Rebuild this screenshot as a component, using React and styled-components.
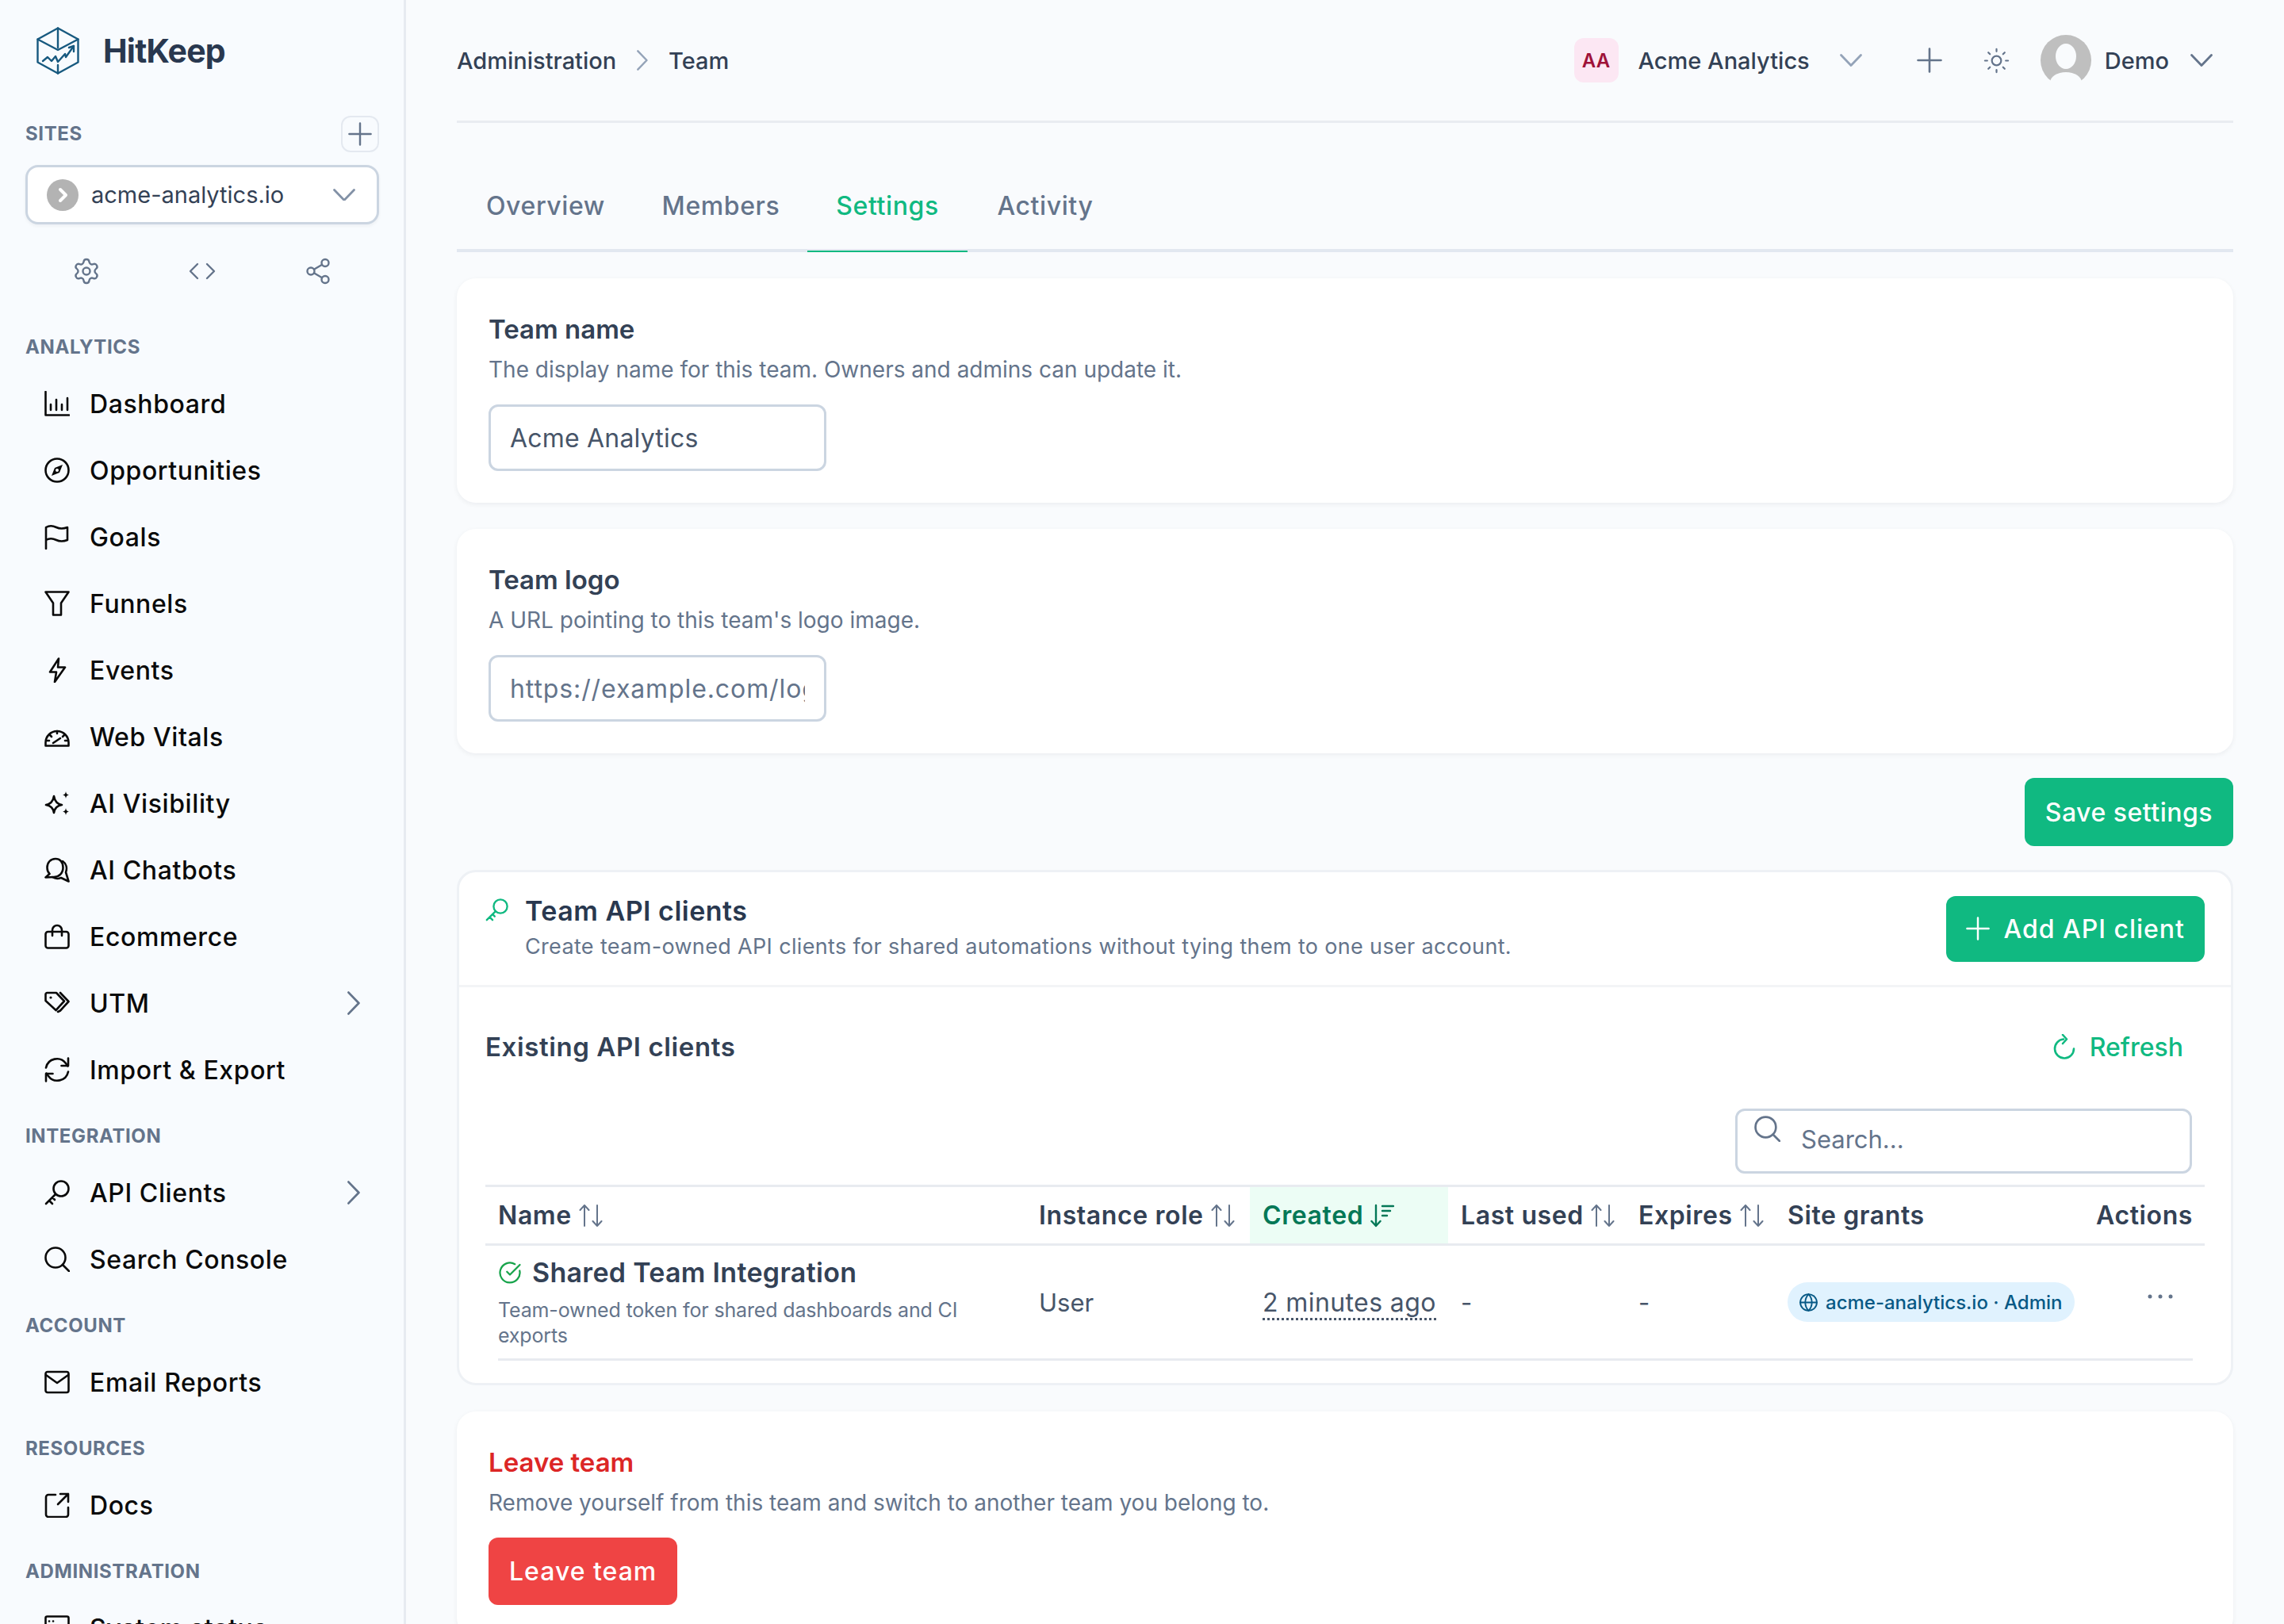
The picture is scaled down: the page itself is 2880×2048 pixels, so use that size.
import React from "react";
import styled, { createGlobalStyle } from "styled-components";
import { Settings, Code, Share2, Sun, CircleCheckBig, Globe } from "lucide-react";

const GlobalStyle = createGlobalStyle`
  * { box-sizing: border-box; }
  html, body { margin: 0; padding: 0; background: #f9fbfd; }
  body { font-family: "Inter", "Noto Sans", sans-serif; color: #0f172a; }
`;

const Glyph = styled.svg`
  width: ${(p) => p.$w || 32}px;
  height: ${(p) => p.$h || p.$w || 32}px;
  flex: none;
  fill: none;
  stroke: currentColor;
  stroke-width: ${(p) => p.$sw ?? 2.6};
  stroke-linecap: round;
  stroke-linejoin: round;
  color: ${(p) => p.$color || "inherit"};
`;

const Icon = ({ children, ...rest }) => (
  <Glyph viewBox="0 0 32 32" {...rest}>
    {children}
  </Glyph>
);

const ChartIcon = () => (
  <Icon>
    <path d="M1.5 1v29.5H31" />
    <path d="M8 24v-7M15 24V11M22 24v-7M29 24V9" />
  </Icon>
);
const CompassIcon = () => (
  <Icon>
    <circle cx="16" cy="16" r="14.5" />
    <path d="M23 9l-4 10-10 4 4-10z" fill="currentColor" stroke="none" />
    <circle cx="16" cy="16" r="2" fill="#f9fbfd" stroke="none" />
  </Icon>
);
const FlagIcon = () => (
  <Icon>
    <path d="M2 31V4c5-3 9-2 13 0s9 2 14 0v16c-5 2-10 2-14 0s-8-3-13 0" />
  </Icon>
);
const FilterIcon = () => (
  <Icon>
    <path d="M1.5 1.5h29L21 15.5V30.5H11V15.5z" />
  </Icon>
);
const BoltIcon = () => (
  <Icon>
    <path d="M18 1.5L7 18.5h8L13 31l13-18.5h-9z" />
  </Icon>
);
const GaugeIcon = () => (
  <Icon>
    <path d="M1.5 27.5v-4a14.5 14.500 0 0 1 29 0v4z" />
    <path d="M11 24l9-6M16 9v3M7 14l2 2M25 14l-2 2M3 21h3M26 21h3" />
  </Icon>
);
const SparklesIcon = () => (
  <Icon>
    <path d="M12 7c1 6 4 10 10 11-6 1-9 4-10 10-1-6-4-9-10-10 6-1 9-5 10-11z" />
    <path d="M27 1c.5 3 1.500 4 4 4.500-2.500.5-3.500 1.500-4 4.500-.5-3-1.500-4-4-4.500 2.500-.5 3.500-1.500 4-4.500zM27 22c.5 3 1.500 4 4 4.500-2.500.5-3.500 1.500-4 4.500-.5-3-1.500-4-4-4.500 2.500-.5 3.500-1.500 4-4.500z" fill="currentColor" stroke="none" />
  </Icon>
);
const CommentsIcon = () => (
  <Icon>
    <path d="M14 2C7.500 2 3.500 7 3.500 13c0 3.500 1 6 3 8L1.500 25.500 12 25c6.500 0 11.500-5 11.500-12S19.500 2 14 2z" />
    <path d="M23 5c4.500 3 6 8.500 4 14l3.500 11.500-9.500-4.500c-4 1.500-8 1-11-1" />
  </Icon>
);
const BagIcon = () => (
  <Icon>
    <rect x="1.500" y="10" width="29" height="20.500" rx="3" />
    <path d="M10 15V8a6 6 0 0 1 12 0v7" />
  </Icon>
);
const TagsIcon = () => (
  <Icon>
    <path d="M1.500 5a2 2 0 0 1 2-2H15l10 10.500L14.500 25 1.500 13z" />
    <circle cx="8" cy="9" r="1.600" fill="currentColor" stroke="none" />
    <path d="M20 3l10.500 11L20 25.500l-3 1.500" />
  </Icon>
);
const SyncIcon = () => (
  <Icon>
    <path d="M2 13.500A14 14 0 0 1 27 8l2.500 3.500" />
    <path d="M30 1.500V11h-8.500" />
    <path d="M30 18.500A14 14 0 0 1 5 24l-2.500-3.500" />
    <path d="M2 30.500V21h8.500" />
  </Icon>
);
const KeyIcon = ({ $color, $w }) => (
  <Icon $color={$color} $w={$w}>
    <circle cx="21" cy="11" r="9.500" />
    <path d="M14 18L2 30M6 26l4 4M10 22l3 3" />
  </Icon>
);
const SearchIcon = ({ $color, $w }) => (
  <Icon $color={$color} $w={$w}>
    <circle cx="14" cy="14" r="12.500" />
    <path d="M23 23l8 8" />
  </Icon>
);
const MailIcon = () => (
  <Icon>
    <rect x="1.500" y="3" width="29" height="26" rx="2.500" />
    <path d="M2 7l14 10 14-10" />
  </Icon>
);
const ExternalIcon = () => (
  <Icon>
    <path d="M14 3H5a3 3 0 0 0-3 3v22a3 3 0 0 0 3 3h22a3 3 0 0 0 3-3V19" />
    <path d="M17 15L30 2M20 2h10v10" />
  </Icon>
);
const ServerIcon = () => (
  <Icon>
    <rect x="1.500" y="1.500" width="29" height="12" rx="2" />
    <rect x="1.500" y="13.500" width="29" height="14" rx="2" />
    <path d="M6 7.500h.1M11 7.500h.1" />
  </Icon>
);
const PlusIcon = ({ $color, $w, $sw }) => (
  <Icon $color={$color} $w={$w} $sw={$sw}>
    <path d="M16 1.500v29M1.500 16h29" />
  </Icon>
);
const ChevronDown = ({ $color, $w = 28 }) => (
  <Glyph viewBox="0 0 28 16" $w={$w} $h={$w * 0.57} $color={$color} $sw={2.8}>
    <path d="M1.500 1.500L14 14.500 26.500 1.500" />
  </Glyph>
);
const ChevronRight = ({ $color, $h = 30 }) => (
  <Glyph viewBox="0 0 16 30" $w={$h * 0.53} $h={$h} $color={$color} $sw={2.8}>
    <path d="M1.500 1.500L14.500 15 1.500 28.500" />
  </Glyph>
);
const SortIcon = () => (
  <Glyph viewBox="0 0 30 30" $w={30} $color="#64748b" $sw={2}>
    <path d="M7 28V2M1.500 8L7 2l5.500 6M23 2v26M17.500 22l5.500 6 5.500-6" />
  </Glyph>
);
const SortDownIcon = () => (
  <Glyph viewBox="0 0 30 30" $w={30} $color="#047857" $sw={2.4}>
    <path d="M7 2v26M1.500 22L7 28l5.500-6M15 3h14M15 9h10M15 15h6" />
  </Glyph>
);
const RefreshIcon = () => (
  <Icon $color="#10b981">
    <path d="M15 6.500A12 12 0 1 0 28 18.500" />
    <path d="M14 1l5 5.500-5 5.500" />
  </Icon>
);
const Dots = () => (
  <Glyph viewBox="0 0 34 8" $w={34} $h={8} $color="#64748b" $sw={0}>
    <circle cx="4" cy="4" r="2.500" fill="currentColor" />
    <circle cx="17" cy="4" r="2.500" fill="currentColor" />
    <circle cx="30" cy="4" r="2.500" fill="currentColor" />
  </Glyph>
);
const Logo = () => (
  <Glyph viewBox="0 0 54 60" $w={54} $h={60} $color="#17597f" $sw={2.4}>
    <path d="M27 1.500l25.500 14v29L27 58.500l-25.500-14v-29z" />
    <path d="M1.500 15.500L27 29l25.500-13.500M27 1.500V26M27 48v10.500" />
    <path d="M8 43l6-5 5 5 5-6 3 7 9-10 1 4 10-14" />
    <path d="M41 26l6-2v7" />
  </Glyph>
);
const SiteBadge = () => (
  <Glyph viewBox="0 0 40 40" $w={40} $sw={0}>
    <circle cx="20" cy="20" r="20" fill="#b3b3b3" />
    <path d="M17 13l7 7-7 7" fill="none" stroke="#fff" strokeWidth="4" />
  </Glyph>
);
const Avatar = () => (
  <Glyph viewBox="0 0 64 64" $w={64} $sw={0}>
    <circle cx="32" cy="32" r="32" fill="#bfbfbf" />
    <ellipse cx="32" cy="27" rx="13" ry="16" fill="#f9fbfd" />
    <ellipse cx="32" cy="60" rx="20" ry="13" fill="#f9fbfd" />
  </Glyph>
);

const Page = styled.div`
  display: flex;
  width: 100%;
  height: 100vh;
  overflow: hidden;
`;

const Sidebar = styled.aside`
  width: 512px;
  flex: none;
  height: 100%;
  overflow: hidden;
  background: #f8fbfe;
  border-right: 3px solid #e7ebf1;
  padding: 0 31px 0 32px;
`;

const Brand = styled.div`
  display: flex;
  align-items: center;
  gap: 30px;
  height: 128px;
  padding-left: 14px;
`;

const BrandName = styled.span`
  font-size: 41px;
  font-weight: 700;
  color: #29384f;
  letter-spacing: -0.8px;
`;

const SitesHead = styled.div`
  display: flex;
  align-items: center;
  justify-content: space-between;
  height: 48px;
  margin-top: 17px;
`;

const GroupLabel = styled.div`
  font-size: 24px;
  font-weight: 700;
  color: #64748b;
  letter-spacing: 0.6px;
  line-height: 32px;
  padding: ${(p) => (p.$flush ? "0" : "26px 0 13px")};
`;

const SquareButton = styled.button`
  width: 48px;
  height: 46px;
  display: flex;
  align-items: center;
  justify-content: center;
  background: #f8fbfe;
  border: 2px solid #e4e9f0;
  border-radius: 12px;
  padding: 0;
  color: #64748b;
`;

const SiteSelect = styled.div`
  display: flex;
  align-items: center;
  height: 75px;
  margin-top: 15px;
  padding: 0 27px 0 24px;
  background: #fff;
  border: 3px solid #cbd5e1;
  border-radius: 16px;
  box-shadow: 0 2px 4px rgba(15, 23, 42, 0.05);
`;

const SiteName = styled.span`
  flex: 1;
  margin-left: 16px;
  font-size: 29px;
  color: #334155;
`;

const SiteTools = styled.div`
  display: grid;
  grid-template-columns: repeat(3, 146px);
  justify-content: center;
  justify-items: center;
  align-items: center;
  margin-top: 41px;
  height: 32px;
  color: #64748b;
`;

const SectionBlock = styled.nav`
  margin-top: ${(p) => (p.$first ? "40px" : "0")};
`;

const NavItem = styled.a`
  display: flex;
  align-items: center;
  height: 84px;
  padding: 0 24px;
  color: #0a0a0a;
  font-size: 32px;
  font-weight: 500;
  letter-spacing: 0.6px;
`;

const NavText = styled.span`
  flex: 1;
  margin-left: 25px;
`;

const Main = styled.main`
  flex: 1;
  min-width: 0;
  padding: 0 64px;
`;

const TopBar = styled.header`
  display: flex;
  align-items: center;
  height: 155px;
  border-bottom: 3px solid #e9ecf1;
  font-size: 29px;
  color: #334155;
`;

const Crumb = styled.span`
  font-weight: 500;
  margin: ${(p) => (p.$current ? "0 0 0 26px" : "0 26px 0 0")};
`;

const Spacer = styled.div`
  flex: 1;
`;

const TeamBadge = styled.span`
  width: 56px;
  height: 56px;
  display: flex;
  align-items: center;
  justify-content: center;
  border-radius: 12px;
  background: #fce7f3;
  color: #9f1239;
  font-size: 24px;
  font-weight: 600;
`;

const TopLabel = styled.span`
  margin: ${(p) => p.$margin};
  font-weight: 500;
`;

const TopAction = styled.span`
  display: flex;
  margin: ${(p) => p.$margin};
`;

const TabList = styled.div`
  display: flex;
  height: 118px;
  margin-top: 45px;
  border-bottom: 4px solid #e2e8f0;
`;

const Tab = styled.a`
  position: relative;
  display: flex;
  align-items: center;
  justify-content: center;
  width: ${(p) => p.$w}px;
  height: 118px;
  font-size: 32px;
  font-weight: 500;
  letter-spacing: 0.6px;
  color: ${(p) => (p.$active ? "#10b981" : "#64748b")};
  ${(p) =>
    p.$active &&
    `&::after {
      content: "";
      position: absolute;
      left: 0;
      right: 0;
      bottom: 0;
      height: 2px;
      background: #10b981;
    }`}
`;

const Card = styled.section`
  margin-top: 33px;
  padding: 42px 40px 40px;
  background: #fff;
  border-radius: 24px;
  box-shadow: 0 2px 6px rgba(15, 23, 42, 0.06);
`;

const CardTitle = styled.h2`
  margin: 0;
  font-size: 33px;
  line-height: 44px;
  font-weight: 600;
  color: ${(p) => p.$color || "#334155"};
`;

const CardText = styled.p`
  margin: 7px 0 22px;
  font-size: 28px;
  line-height: 44px;
  color: #64748b;
`;

const TextInput = styled.div`
  width: 426px;
  height: 84px;
  margin-top: ${(p) => p.$mt || 0}px;
  display: flex;
  align-items: center;
  overflow: hidden;
  white-space: nowrap;
  padding: 0 24px;
  background: #fff;
  border: 3px solid #cbd5e1;
  border-radius: 12px;
  font-size: 32px;
  letter-spacing: ${(p) => p.$ls || 0.2}px;
  color: ${(p) => p.$color || "#475569"};
`;

const ClipText = styled.span`
  display: block;
  overflow: hidden;
`;

const ActionRow = styled.div`
  display: flex;
  justify-content: flex-end;
  margin-top: 31px;
`;

const FilledButton = styled.button`
  display: flex;
  align-items: center;
  gap: 17px;
  height: ${(p) => p.$h || 86}px;
  padding: 0 ${(p) => p.$px || 26}px;
  border: none;
  border-radius: 12px;
  background: ${(p) => p.$bg || "#10b981"};
  color: #fff;
  font-family: inherit;
  font-size: 32px;
  font-weight: 500;
  letter-spacing: ${(p) => p.$ls || 0.5}px;
`;

const ClientsCard = styled.section`
  margin-top: 30px;
  background: #fff;
  border: 3px solid #eef1f5;
  border-radius: 24px;
`;

const ClientsHead = styled.div`
  display: flex;
  align-items: center;
  justify-content: space-between;
  height: 145px;
  padding: 0 33px;
  border-bottom: 3px solid #f3f4f6;
`;

const HeadLeft = styled.div`
  display: flex;
  gap: 21px;
`;

const KeyWrap = styled.div`
  padding-top: 6px;
`;

const HeadTitle = styled.h2`
  margin: 0;
  font-size: 34px;
  line-height: 44px;
  font-weight: 600;
  letter-spacing: 0.5px;
  color: #29384f;
`;

const HeadText = styled.p`
  margin: 1px 0 0;
  font-size: 27px;
  line-height: 44px;
  color: #64748b;
  letter-spacing: 0.34px;
`;

const ClientsBody = styled.div`
  padding: 35px 33px 28px;
`;

const ListHead = styled.div`
  display: flex;
  align-items: center;
  justify-content: space-between;
  height: 80px;
  padding-right: 27px;
`;

const ListTitle = styled.h3`
  margin: 0;
  font-size: 33px;
  font-weight: 600;
  letter-spacing: 0.6px;
  color: #334155;
`;

const RefreshLink = styled.a`
  display: flex;
  align-items: center;
  gap: 16px;
  color: #10b981;
  font-size: 32px;
  font-weight: 500;
`;

const SearchRow = styled.div`
  display: flex;
  justify-content: flex-end;
  margin-top: 38px;
  padding-right: 16px;
`;

const SearchBox = styled.div`
  display: flex;
  width: 576px;
  height: 82px;
  padding: 6px 0 0 21px;
  background: #fff;
  border: 3px solid #cbd5e1;
  border-radius: 12px;
  color: #64748b;
  font-size: 31px;
`;

const SearchHint = styled.span`
  margin: 11px 0 0 26px;
`;

const HeadRow = styled.div`
  display: grid;
  grid-template-columns: 682px 282px 250px 224px 188px 402px 140px;
  height: 77px;
  margin-top: 14px;
  border-top: 3px solid #e8ebf0;
  border-bottom: 3px solid #e8ebf0;
`;

const HeadCell = styled.div`
  display: flex;
  align-items: center;
  gap: 9px;
  padding: 0 ${(p) => (p.$end ? "15px" : "0")} 0 16px;
  justify-content: ${(p) => (p.$end ? "flex-end" : "flex-start")};
  font-size: 32px;
  font-weight: 600;
  letter-spacing: 0.6px;
  white-space: nowrap;
  color: ${(p) => (p.$active ? "#047857" : "#334155")};
  background: ${(p) => (p.$active ? "#ecfdf5" : "transparent")};
`;

const BodyRow = styled.div`
  display: grid;
  grid-template-columns: 666px 282px 250px 224px 188px 402px 125px;
  height: 145px;
  margin: 0 15px 0 16px;
  align-items: center;
  border-bottom: 3px solid #e8ebf0;
`;

const BodyCell = styled.div`
  padding-left: ${(p) => (p.$flush ? 0 : 16)}px;
  font-size: 31px;
  color: #475569;
`;

const ClientName = styled.div`
  display: flex;
  align-items: center;
  gap: 13px;
  font-size: 34px;
  font-weight: 600;
  letter-spacing: 0.3px;
  color: #334155;
`;

const ClientNote = styled.div`
  margin-top: 11px;
  max-width: 610px;
  font-size: 25px;
  line-height: 32px;
  color: #64748b;
  letter-spacing: -0.15px;
`;

const TimeAgo = styled.span`
  font-size: 32px;
  letter-spacing: 0.4px;
  border-bottom: 3px dotted #475569;
`;

const GrantPill = styled.span`
  display: inline-flex;
  align-items: center;
  gap: 9px;
  height: 50px;
  padding: 0 16px 0 14px;
  border-radius: 25px;
  background: #e0f2fe;
  color: #075985;
  font-size: 24px;
  font-weight: 500;
  white-space: nowrap;
`;

const DotsCell = styled.div`
  display: flex;
  padding: 0 0 14px 67px;
`;

const analytics = [
  ["Dashboard", ChartIcon],
  ["Opportunities", CompassIcon],
  ["Goals", FlagIcon],
  ["Funnels", FilterIcon],
  ["Events", BoltIcon],
  ["Web Vitals", GaugeIcon],
  ["AI Visibility", SparklesIcon],
  ["AI Chatbots", CommentsIcon],
  ["Ecommerce", BagIcon],
  ["UTM", TagsIcon, true],
  ["Import & Export", SyncIcon],
];

const sections = [
  { label: "INTEGRATION", items: [["API Clients", KeyIcon, true], ["Search Console", SearchIcon]] },
  { label: "ACCOUNT", items: [["Email Reports", MailIcon]] },
  { label: "RESOURCES", items: [["Docs", ExternalIcon]] },
  { label: "ADMINISTRATION", items: [["System status", ServerIcon]] },
];

const NavRow = ({ item: [name, Ico, more] }) => (
  <NavItem>
    <Ico />
    <NavText>{name}</NavText>
    {more && <ChevronRight $color="#64748b" />}
  </NavItem>
);

const sortable = ["Instance role", "Created", "Last used", "Expires"];

export default function App() {
  return (
    <Page>
      <GlobalStyle />
      <Sidebar>
        <Brand>
          <Logo />
          <BrandName>HitKeep</BrandName>
        </Brand>
        <SitesHead>
          <GroupLabel $flush>SITES</GroupLabel>
          <SquareButton>
            <PlusIcon $w={30} $sw={2.6} />
          </SquareButton>
        </SitesHead>
        <SiteSelect>
          <SiteBadge />
          <SiteName>acme-analytics.io</SiteName>
          <ChevronDown $color="#8291a6" />
        </SiteSelect>
        <SiteTools>
          <Settings size={36} strokeWidth={1.6} />
          <Code size={36} strokeWidth={1.6} />
          <Share2 size={36} strokeWidth={1.6} />
        </SiteTools>
        <SectionBlock $first>
          <GroupLabel>ANALYTICS</GroupLabel>
          {analytics.map((item) => (
            <NavRow key={item[0]} item={item} />
          ))}
        </SectionBlock>
        {sections.map((s) => (
          <SectionBlock key={s.label}>
            <GroupLabel>{s.label}</GroupLabel>
            {s.items.map((item) => (
              <NavRow key={item[0]} item={item} />
            ))}
          </SectionBlock>
        ))}
      </Sidebar>

      <Main>
        <TopBar>
          <Crumb>Administration</Crumb>
          <ChevronRight $color="#94a3b8" $h={26} />
          <Crumb $current>Team</Crumb>
          <Spacer />
          <TeamBadge>AA</TeamBadge>
          <TopLabel $margin="0 0 0 25px">Acme Analytics</TopLabel>
          <TopAction $margin="0 0 0 38px">
            <ChevronDown $color="#94a3b8" />
          </TopAction>
          <TopAction $margin="0 0 0 69px">
            <PlusIcon $color="#64748b" $sw={2.6} />
          </TopAction>
          <TopAction $margin="0 0 0 51px">
            <Sun size={35} strokeWidth={1.5} color="#64748b" />
          </TopAction>
          <TopAction $margin="0 0 0 38px">
            <Avatar />
          </TopAction>
          <TopLabel $margin="0 0 0 17px">Demo</TopLabel>
          <TopAction $margin="0 26px 0 27px">
            <ChevronDown $color="#64748b" />
          </TopAction>
        </TopBar>

        <TabList>
          <Tab $w={224}>Overview</Tab>
          <Tab $w={218}>Members</Tab>
          <Tab $w={202} $active>
            Settings
          </Tab>
          <Tab $w={196}>Activity</Tab>
        </TabList>

        <Card>
          <CardTitle>Team name</CardTitle>
          <CardText>The display name for this team. Owners and admins can update it.</CardText>
          <TextInput>Acme Analytics</TextInput>
        </Card>

        <Card>
          <CardTitle>Team logo</CardTitle>
          <CardText>A URL pointing to this team's logo image.</CardText>
          <TextInput $color="#64748b" $mt={2} $ls={0.9}>
            <ClipText>https://example.com/logo.png</ClipText>
          </TextInput>
        </Card>

        <ActionRow>
          <FilledButton>Save settings</FilledButton>
        </ActionRow>

        <ClientsCard>
          <ClientsHead>
            <HeadLeft>
              <KeyWrap>
                <KeyIcon $color="#10b981" $w={29} />
              </KeyWrap>
              <div>
                <HeadTitle>Team API clients</HeadTitle>
                <HeadText>
                  Create team-owned API clients for shared automations without tying them to one user account.
                </HeadText>
              </div>
            </HeadLeft>
            <FilledButton $h={83} $px={25} $ls={1}>
              <PlusIcon $color="#fff" $w={30} $sw={2.6} />
              Add API client
            </FilledButton>
          </ClientsHead>

          <ClientsBody>
            <ListHead>
              <ListTitle>Existing API clients</ListTitle>
              <RefreshLink>
                <RefreshIcon />
                Refresh
              </RefreshLink>
            </ListHead>
            <SearchRow>
              <SearchBox>
                <SearchIcon $color="#64748b" $w={33} />
                <SearchHint>Search...</SearchHint>
              </SearchBox>
            </SearchRow>

            <HeadRow>
              <HeadCell>
                Name <SortIcon />
              </HeadCell>
              {sortable.map((h) => (
                <HeadCell key={h} $active={h === "Created"}>
                  {h} {h === "Created" ? <SortDownIcon /> : <SortIcon />}
                </HeadCell>
              ))}
              <HeadCell>Site grants</HeadCell>
              <HeadCell $end>Actions</HeadCell>
            </HeadRow>

            <BodyRow>
              <BodyCell $flush>
                <ClientName>
                  <CircleCheckBig size={30} strokeWidth={1.8} color="#16a34a" />
                  Shared Team Integration
                </ClientName>
                <ClientNote>Team-owned token for shared dashboards and CI exports</ClientNote>
              </BodyCell>
              <BodyCell>User</BodyCell>
              <BodyCell>
                <TimeAgo>2 minutes ago</TimeAgo>
              </BodyCell>
              <BodyCell>-</BodyCell>
              <BodyCell>-</BodyCell>
              <BodyCell>
                <GrantPill>
                  <Globe size={25} strokeWidth={1.8} />
                  acme-analytics.io · Admin
                </GrantPill>
              </BodyCell>
              <DotsCell>
                <Dots />
              </DotsCell>
            </BodyRow>
          </ClientsBody>
        </ClientsCard>

        <Card>
          <CardTitle $color="#dc2626">Leave team</CardTitle>
          <CardText>Remove yourself from this team and switch to another team you belong to.</CardText>
          <FilledButton $bg="#ef4444" $h={85} $ls={1}>
            Leave team
          </FilledButton>
        </Card>
      </Main>
    </Page>
  );
}
